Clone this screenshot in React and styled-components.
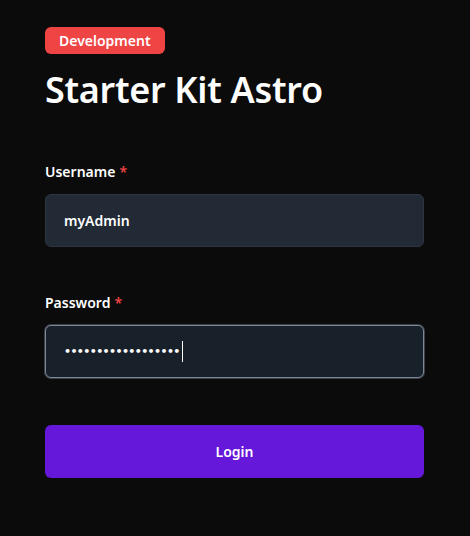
import React from "react";
import styled, { createGlobalStyle } from "styled-components";

const Global = createGlobalStyle`
  html, body { margin: 0; padding: 0; background: #0b0b0b; }
  body { font-family: "Noto Sans", "Open Sans", sans-serif; color: #fff; }
`;

const Page = styled.main`
  min-height: 536px;
  box-sizing: border-box;
  padding: 27px 46px 0 45px;
  display: flex;
  flex-direction: column;
  align-items: flex-start;
`;

const Badge = styled.span`
  display: inline-flex;
  align-items: center;
  height: 27px;
  padding: 0 14px;
  border-radius: 6px;
  background: #ef4444;
  color: #fff;
  font-size: 14px;
  font-weight: 600;
`;

const Title = styled.h1`
  margin: 12px 0 0;
  font-size: 36px;
  line-height: 48px;
  font-weight: 600;
  letter-spacing: -0.3px;
`;

const Form = styled.form`
  width: 100%;
  display: flex;
  flex-direction: column;
  margin-top: 48px;
`;

const Field = styled.div`
  display: flex;
  flex-direction: column;
  margin-bottom: ${(p) => p.$mb}px;
`;

const Label = styled.label`
  font-size: 14px;
  font-weight: 600;
  line-height: 20px;
  margin-bottom: 12px;
`;

const Req = styled.span`
  color: #ef4444;
  margin-left: 4px;
`;

const Box = styled.div`
  height: 53px;
  box-sizing: border-box;
  border-radius: 6px;
  border: 1px solid ${(p) => (p.$focus ? "#7c8696" : "#2c3541")};
  background: ${(p) => (p.$focus ? "#18202a" : "#222a35")};
  box-shadow: ${(p) => (p.$focus ? "0 0 0 1px rgba(148,163,184,0.35)" : "none")};
  display: flex;
  align-items: center;
  padding-left: 18px;
  font-size: 14px;
  font-weight: 600;
  color: #fff;
`;

const Dots = styled.span`
  font-size: 11px;
  letter-spacing: -0.6px;
  font-family: "DejaVu Sans", sans-serif;
`;

const Caret = styled.span`
  display: inline-block;
  width: 1px;
  height: 21px;
  background: #fff;
  margin-left: 2px;
`;

const Button = styled.button`
  height: 53px;
  border: none;
  border-radius: 6px;
  background: #6517da;
  color: #fff;
  font-family: inherit;
  font-size: 14px;
  font-weight: 600;
`;

export default function App() {
  return (
    <>
      <Global />
      <Page>
        <Badge>Development</Badge>
        <Title>Starter Kit Astro</Title>
        <Form onSubmit={(e) => e.preventDefault()}>
          <Field $mb={46}>
            <Label>
              Username<Req>*</Req>
            </Label>
            <Box>myAdmin</Box>
          </Field>
          <Field $mb={47}>
            <Label>
              Password<Req>*</Req>
            </Label>
            <Box $focus>
              <Dots>{"••••••••••••••••••"}</Dots>
              <Caret />
            </Box>
          </Field>
          <Button type="submit">Login</Button>
        </Form>
      </Page>
    </>
  );
}
